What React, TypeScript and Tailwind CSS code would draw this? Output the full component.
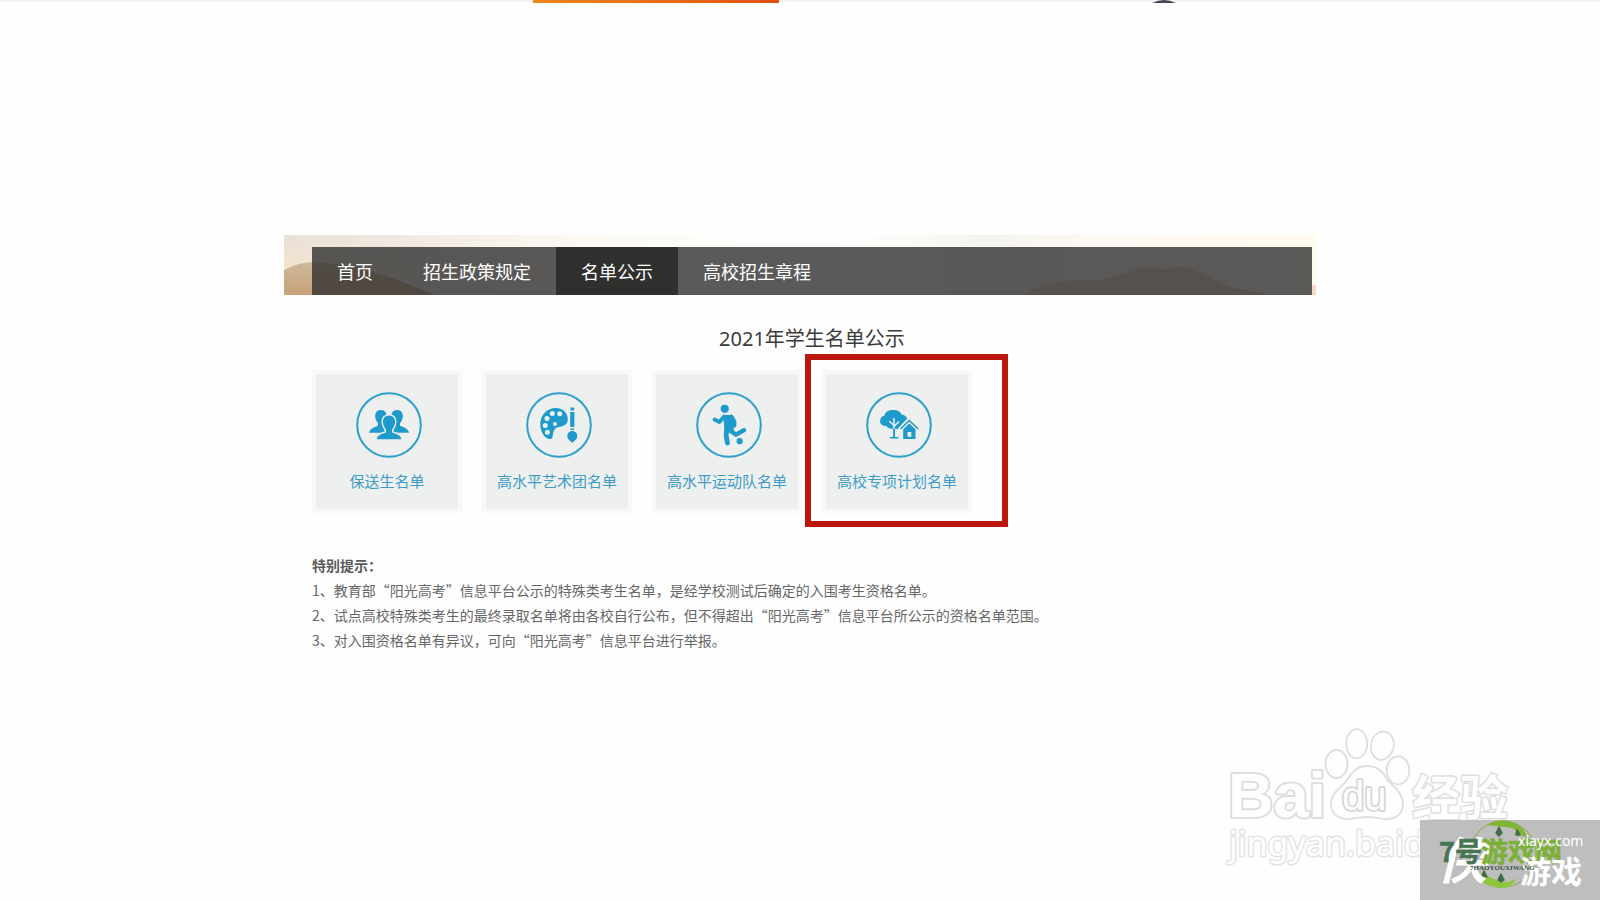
import type { ReactNode } from 'react';

const navItems = [
  { label: '首页', active: false },
  { label: '招生政策规定', active: false },
  { label: '名单公示', active: true },
  { label: '高校招生章程', active: false },
];

function StudentsIcon() {
  return (
    <g fill="#1f9bcb">
      <path d="M25 18c4 0 6 3 5.600 7c-.3 3-1.600 5-2.600 6.500v3l4 4v2.200H13c1-4 4-5.200 9-7v-2.500c-1.500-2-2.600-4-2.800-6.500c-.3-4 2-6.700 5.800-6.700z" />
      <path d="M41 18c-4 0-6 3-5.600 7c.3 3 1.600 5 2.600 6.500v3l-4 4v2.200H53c-1-4-4-5.200-9-7v-2.500c1.500-2 2.600-4 2.800-6.500c.3-4-2-6.700-5.800-6.700z" />
      <path
        d="M33 23.500c4.200 0 6.300 3 6 7c-.2 3-1.500 5.200-3 7v3c5 1.700 8.500 2.500 9.300 6.700H20.700c.8-4.200 4.300-5 9.300-6.700v-3c-1.500-1.800-2.800-4-3-7c-.3-4 1.800-7 6-7z"
        stroke="#edf0f0"
        strokeWidth="3"
        paintOrder="stroke"
      />
    </g>
  );
}

function ArtIcon() {
  return (
    <g fill="#1f9bcb">
      <path d="M30 16C20 16 14 24 14.300 33c.2 7 4.700 14 9.700 14c4 0 2-5 4-8.500c2.500-4.500 6.500-3 10-5c3-1.500 4.500-4.500 3.500-8.500C40.500 19.500 36 16 30 16z" />
      <g fill="#edf0f0">
        <circle cx="26.300" cy="21.500" r="2.500" />
        <circle cx="33.700" cy="21.700" r="2.500" />
        <circle cx="21" cy="26.600" r="2.500" />
        <circle cx="19.200" cy="33.500" r="2.500" />
        <circle cx="21.400" cy="40.300" r="2.500" />
        <circle cx="29" cy="32" r="2.100" />
      </g>
      <path d="M44.500 15.500h3.600v3h-3.600zM44.200 20h4.200v15h-4.200zM44.500 36.500h3.600v1.600h-3.600z" />
      <path d="M46.300 39c3 0 5 2.400 5 5.200c0 3-2.600 4-5 6.800c-2.400-2.800-5-3.800-5-6.800c0-2.800 2-5.200 5-5.200z" />
    </g>
  );
}

function SportIcon() {
  return (
    <g fill="#1f9bcb" stroke="#1f9bcb" strokeLinecap="round" strokeLinejoin="round">
      <circle cx="28.700" cy="16.800" r="4.100" stroke="none" />
      <path d="M28.500 24.500h6l1.500 7 .5 7.500-6.500.5-.5-8z" strokeWidth="3" />
      <path d="M28 24.500L23.500 30 18.500 27.500M35.500 24.500l3 5v4" fill="none" strokeWidth="3.800" />
      <path d="M30.500 38l-.3 6 1.300 7" fill="none" strokeWidth="4.800" />
      <path d="M34 38.500l6 4.200 8-4.500" fill="none" strokeWidth="4.400" />
      <circle cx="43.700" cy="49.200" r="3.100" stroke="none" />
    </g>
  );
}

function VillageIcon() {
  return (
    <g fill="#1f9bcb">
      <path d="M18.500 23.500c.5-3.500 4.500-6 8.500-5.500c4-.3 7.500 1.300 8.500 4.500c3.500.3 5.500 2.500 6 5l-8 8.500c-2 1.200-4 1.300-5.500.3c-3 .8-6.500.2-7.500-2.300c-3.500.2-6.400-1.500-6.400-4.700c0-3 1.500-5.200 4.400-5.800z" />
      <path d="M28 26v12M28 33.500l-4.800-4.500M28 34.500l5-5" stroke="#edf0f0" strokeWidth="1.500" fill="none" />
      <path d="M27.100 36.500h1.900V45h3.300v1.500h-8.500V45h3.300z" />
      <path d="M34 38l9.300-10 9.500 10" stroke="#edf0f0" strokeWidth="5" fill="none" />
      <path d="M34.500 37l8.800-8.500 9 8.500" stroke="#1f9bcb" strokeWidth="1.600" fill="none" />
      <path d="M43.300 31.500l6.200 5.800V47H37.200v-9.700z" />
      <path d="M41.500 40h3.800v4.800h-3.800z" fill="#edf0f0" />
    </g>
  );
}

const cards: { label: string; icon: ReactNode; marked?: boolean }[] = [
  { label: '保送生名单', icon: <StudentsIcon /> },
  { label: '高水平艺术团名单', icon: <ArtIcon /> },
  { label: '高水平运动队名单', icon: <SportIcon /> },
  { label: '高校专项计划名单', icon: <VillageIcon />, marked: true },
];

const notes = [
  '1、教育部“阳光高考”信息平台公示的特殊类考生名单，是经学校测试后确定的入围考生资格名单。',
  '2、试点高校特殊类考生的最终录取名单将由各校自行公布，但不得超出“阳光高考”信息平台所公示的资格名单范围。',
  '3、对入围资格名单有异议，可向“阳光高考”信息平台进行举报。',
];

function BannerScenery() {
  return (
    <svg className="absolute inset-0 h-full w-full" viewBox="0 0 1032 60" preserveAspectRatio="none" aria-hidden="true">
      <defs>
        <linearGradient id="sky" x1="0" x2="1" y1="0" y2="0">
          <stop offset="0" stopColor="#e9e0d7" />
          <stop offset="0.12" stopColor="#f1eae2" />
          <stop offset="0.3" stopColor="#fdfaf5" />
          <stop offset="0.5" stopColor="#fefefd" />
          <stop offset="0.6" stopColor="#fbfbf8" />
          <stop offset="0.68" stopColor="#f5f3ef" />
          <stop offset="0.8" stopColor="#fdf9f4" />
          <stop offset="1" stopColor="#fffbec" />
        </linearGradient>
        <linearGradient id="hill" x1="0" x2="0" y1="0" y2="1">
          <stop offset="0" stopColor="#cdb99c" />
          <stop offset="1" stopColor="#c6a276" />
        </linearGradient>
        <linearGradient id="glow" x1="0" x2="0" y1="0" y2="1">
          <stop offset="0" stopColor="#f5e6cd" stopOpacity="0" />
          <stop offset="1" stopColor="#f5e6cd" />
        </linearGradient>
        <linearGradient id="fade" x1="0" x2="1" y1="0" y2="0">
          <stop offset="0" stopColor="#ffffff" />
          <stop offset="1" stopColor="#ffffff" stopOpacity="0" />
        </linearGradient>
        <mask id="glow-mask">
          <rect width="160" height="60" fill="url(#fade)" />
        </mask>
      </defs>
      <rect width="1032" height="60" fill="url(#sky)" />
      <rect width="160" height="40" fill="url(#glow)" mask="url(#glow-mask)" />
      <path d="M0 35C12 29 20 27 32 27c40 2 80 16 118 33H0z" fill="url(#hill)" />
      <path d="M740 60c18-12 35-16 75-14c25-4 40-16 55-13c12 4 16-3 28-1c18 3 30 12 48 20l40 8z" fill="#e6d3c2" />
      <path d="M1028 50h4v10h-4z" fill="#f6dac8" />
    </svg>
  );
}

function Watermark() {
  return (
    <svg className="pointer-events-none absolute right-0 bottom-0 h-[180px] w-[390px]" viewBox="0 0 390 180" role="img" aria-label="Baidu 经验">
      <g fill="#fefefe" stroke="#dedede" strokeWidth="1.800" strokeLinejoin="round">
        <text x="18" y="97" fontSize="63" fontWeight="700" fontFamily="Liberation Sans, sans-serif" strokeWidth="4" paintOrder="stroke">Bai</text>
        <ellipse cx="126.500" cy="44" rx="11" ry="14" />
        <ellipse cx="146.700" cy="23.700" rx="10.500" ry="14.500" />
        <ellipse cx="172.300" cy="25.700" rx="11.300" ry="14.300" transform="rotate(12 172.300 25.700)" />
        <ellipse cx="188" cy="50.300" rx="11.300" ry="14" />
        <path d="M157 46c10 0 15 5 20 13c5 7 16 13 16 25c0 11-9 16-18 15c-7-1-11-2-18-2s-12 2-20 2c-10 0-17-7-16-17c1-10 11-15 16-22c5-8 10-14 20-14z" />
        <text x="132" y="90" fontSize="40" fontFamily="Liberation Sans, sans-serif" stroke="#d5d5d5" strokeWidth="3.500" paintOrder="stroke">du</text>
        <text x="202" y="95" fontSize="48" fontWeight="700" fontFamily="Noto Sans CJK SC, sans-serif" strokeWidth="3" paintOrder="stroke">经验</text>
        <text x="19" y="136" fontSize="34" fontFamily="Noto Sans, sans-serif" stroke="#e4e4e4" strokeWidth="3" paintOrder="stroke">jingyan.baidu</text>
      </g>
      <rect x="210" y="100" width="180" height="80" fill="#bebebe" />
      <circle cx="293" cy="134" r="33" fill="none" stroke="#8fb25c" strokeWidth="1.200" />
      <path d="M277 105c8-6 23-6 32 1c5 3 7 7 8 12c-5-2-9-5-13-9c-7-3-17-2-27-4z" fill="#82b536" />
      <path d="M263 152c10 0 22 9 31 10c5 0 8-1 12-4c-1 5-6 9-11 10c-13 1-25-5-32-16z" fill="#8fc63d" />
      <path d="M289 107l3 6-3 3-3-3zM307 110l3 5-4 0zM291 154l3 6-3 2-3-2zM274 151l3 6-5-1z" fill="#3f6d4b" stroke="#3f6d4b" strokeWidth="1.500" strokeLinejoin="round" />
      <g fontFamily="Noto Sans CJK SC, sans-serif" fontWeight="700">
        <text x="227" y="159" fontSize="50" fontStyle="italic" fill="#ffffff">侠</text>
        <text x="229" y="142" fontSize="27" fill="#477454" stroke="#477454" strokeWidth="0.600">7号</text>
        <text x="271" y="142" fontSize="27" fill="#7db038" stroke="#7db038" strokeWidth="0.600">游戏网</text>
        <text x="310" y="163" fontSize="31" fill="#ffffff">游戏</text>
      </g>
      <text x="308" y="126" fontSize="14" fill="#ffffff" fontFamily="Noto Sans, sans-serif">xiayx.com</text>
      <text x="260" y="150" fontSize="7" fontWeight="700" fill="#33513b" fontFamily="Liberation Serif, serif">7HAOYOUXIWANG</text>
    </svg>
  );
}

export default function App() {
  return (
    <div lang="zh-CN" className="relative min-h-screen overflow-hidden bg-[#fefefe] font-['Noto_Sans_CJK_SC',sans-serif]">
      <div className="h-[3px] border-t-2 border-[#f4f4f4]" />
      <div className="absolute top-0 left-1/3 h-[3px] w-[246px] bg-linear-to-r from-[#f08519] to-[#e0500e]" />
      <svg className="absolute top-0 left-[72%] h-[3px] w-6" viewBox="0 0 24 3" aria-hidden="true">
        <path d="M0 3Q12-3 24 3z" fill="#4b4653" />
      </svg>

      <header className="relative mx-auto mt-[232px] max-w-[1032px] pt-3 pr-1 pl-7">
        <BannerScenery />
        <nav className="relative flex h-12 bg-[#313131]/80">
          {navItems.map((item) => (
            <a
              key={item.label}
              href="#"
              className={
                item.active
                  ? 'bg-[#2f2f2e] px-[25px] text-lg leading-[48px] text-white'
                  : 'px-[25px] text-lg leading-[48px] text-white'
              }
            >
              {item.label}
            </a>
          ))}
        </nav>
      </header>

      <main className="mx-auto max-w-[1032px] pr-1 pl-7">
        <h1 className="mt-[30px] text-center font-['Noto_Sans','Noto_Sans_CJK_SC',sans-serif] text-xl leading-7 text-[#3c3c3c]">
          2021年学生名单公示
        </h1>
        <ul className="mt-[17px] flex flex-wrap gap-5">
          {cards.map((card) => (
            <li key={card.label} className="relative">
              <a
                href="#"
                className="flex h-[143px] w-[150px] flex-col items-center border-4 border-[#f7f8f8] bg-[#eef0f0] pt-[18px] text-[15px] leading-6 text-[#3d9cc6]"
              >
                <svg className="mb-[11px] ml-[3px] h-[66px] w-[66px] shrink-0" viewBox="0 0 66 66" aria-hidden="true">
                  <circle cx="33" cy="33" r="31.800" fill="none" stroke="#2fa0cc" strokeWidth="2" />
                  {card.icon}
                </svg>
                {card.label}
              </a>
              {card.marked && (
                <span className="pointer-events-none absolute -top-4 -left-[17px] h-[173px] w-[203px] border-6 border-[#bb170d]" />
              )}
            </li>
          ))}
        </ul>
        <section className="mt-10 text-sm leading-[25px] text-[#666]">
          <h2 className="font-bold text-[#5a5a5a]">特别提示：</h2>
          {notes.map((note) => (
            <p key={note}>{note}</p>
          ))}
        </section>
      </main>

      <Watermark />
    </div>
  );
}
